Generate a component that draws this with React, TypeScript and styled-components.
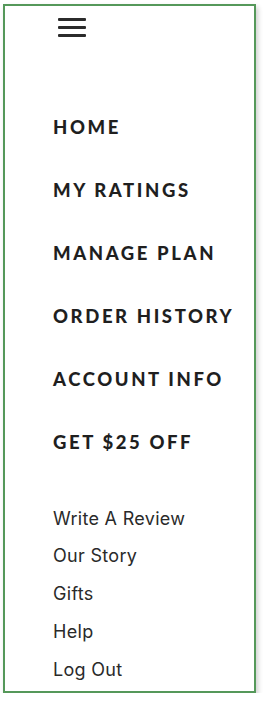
import styled, { createGlobalStyle } from 'styled-components';

const GlobalStyle = createGlobalStyle`
   html, body {
      margin: 0;
      padding: 0;
      background: #ffffff;
   }
   body {
      font-family: 'Lato', 'Liberation Sans', sans-serif;
   }
`;

const mainLinks = ['HOME', 'MY RATINGS', 'MANAGE PLAN', 'ORDER HISTORY', 'ACCOUNT INFO', 'GET $25 OFF'];
const subLinks = ['Write A Review', 'Our Story', 'Gifts', 'Help', 'Log Out'];

export default function App() {

   return (
      <>
         <GlobalStyle />
         <Frame>
            <MenuButton aria-label='menu'>
               <Bar />
               <Bar />
               <Bar />
            </MenuButton>
            <MainList>
               {mainLinks.map((label) => (
                  <MainLink key={label}>{label}</MainLink>
               ))}
            </MainList>
            <SubList>
               {subLinks.map((label) => (
                  <SubLink key={label}>{label}</SubLink>
               ))}
            </SubList>
         </Frame>
      </>
   );

}

const Frame = styled.div`

   box-sizing: border-box;
   display: flex;
   flex-direction: column;
   width: 253px;
   height: 689px;
   margin: 4px 0 0 3px;
   padding: 12px 0 0 48px;
   border: 2px solid #55985a;
   background: #ffffff;
   box-shadow: 2px 3px 5px rgba(0, 0, 0, 0.2);

`;

const MenuButton = styled.div`

   display: flex;
   flex-direction: column;
   gap: 5.5px;
   width: 28px;
   margin-left: 5px;

`;

const Bar = styled.span`

   display: block;
   height: 2.5px;
   border-radius: 1px;
   background: #2b2b2b;

`;

const MainList = styled.nav`

   display: flex;
   flex-direction: column;
   margin-top: 59px;

`;

const MainLink = styled.a`

   display: block;
   height: 63px;
   line-height: 63px;
   font-family: 'Lato', sans-serif;
   font-weight: 900;
   font-size: 18.5px;
   letter-spacing: 2.6px;
   color: #1f1f1f;
   white-space: nowrap;

`;

const SubList = styled.nav`

   display: flex;
   flex-direction: column;
   margin-top: 26px;

`;

const SubLink = styled.a`

   display: block;
   height: 37.75px;
   line-height: 37.75px;
   font-family: 'Inter', sans-serif;
   font-weight: 400;
   font-size: 18px;
   letter-spacing: 0.3px;
   color: #2a2a2a;
   white-space: nowrap;

`;
